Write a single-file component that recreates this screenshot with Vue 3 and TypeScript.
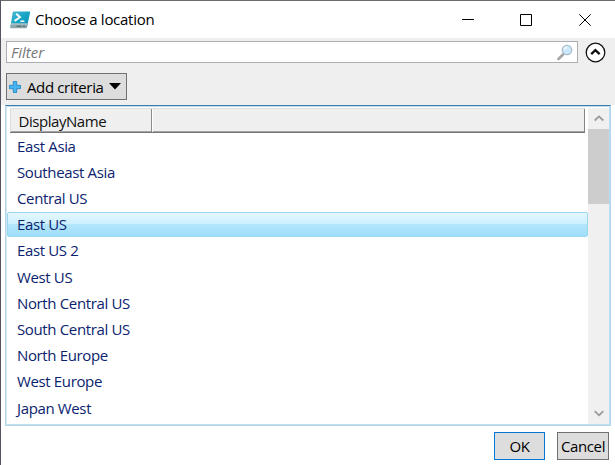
<script setup lang="ts">
import { ref } from 'vue'

const locations: string[] = [
  'East Asia', 'Southeast Asia', 'Central US', 'East US', 'East US 2', 'West US',
  'North Central US', 'South Central US', 'North Europe', 'West Europe', 'Japan West',
]
const selected = ref('East US')
const filter = ref('')
</script>

<template>
  <div class="window">
    <header class="titlebar">
      <svg class="app-icon" width="21" height="18" viewBox="0 0 21 18">
        <defs>
          <linearGradient id="screen" x1="0" y1="0" x2="1" y2="1">
            <stop offset="0" stop-color="#4fb9d4" />
            <stop offset=".5" stop-color="#16a5c5" />
            <stop offset="1" stop-color="#0788b0" />
          </linearGradient>
        </defs>
        <path d="M3.6.5H19.4Q20.3.5 20.1 1.4L17 16Q16.8 17 15.8 17H1.2Q.2 17 .4 16L2.7 1.3Q2.8.5 3.6.5Z" fill="url(#screen)" />
        <path d="M1 12.6H17.8L17 16Q16.7 17.2 15.8 17.2H1.2Q.2 17.2.4 16Z" fill="#8fa5ac" />
        <path d="M1.1 13H17.7" stroke="#bed0d5" />
        <path d="M6.5 15.2H11.5M13 15.2H15" stroke="#455c65" />
        <path d="M6.2 2.7L10 6.2L4.6 9.9" fill="none" stroke="#fff" stroke-width="1.9" />
        <path d="M10.4 10.2H14.4" stroke="#fff" stroke-width="1.5" />
      </svg>
      <span class="title">Choose a location</span>
      <div class="controls">
        <svg width="12" height="12" viewBox="0 0 12 12"><path d="M0 5.5H12" /></svg>
        <svg width="12" height="12" viewBox="0 0 12 12"><path d="M.5.5H11.5V11.5H.5Z" /></svg>
        <svg width="12" height="12" viewBox="0 0 12 12"><path d="M.3.3L11.7 11.7M11.7.3L.3 11.7" /></svg>
      </div>
    </header>

    <section class="tools">
      <div class="filter-row">
        <label class="filter">
          <input v-model="filter" type="text" placeholder="Filter" />
          <svg width="16" height="17" viewBox="0 0 16 17">
            <path d="M1.5 15L6 10.5" stroke="#a6a6a6" stroke-width="2.6" stroke-linecap="round" />
            <circle cx="10" cy="6" r="4.7" fill="#cce9fb" stroke="#aabccc" stroke-width="1.3" />
            <path d="M7.4 5.8Q8 3.5 10.2 3.4" fill="none" stroke="#f1faff" stroke-width="1.6" />
          </svg>
        </label>
        <svg class="collapse" width="21" height="21" viewBox="0 0 21 21">
          <circle cx="10.5" cy="10.5" r="9.3" fill="#fff" stroke="#111" stroke-width="1.3" />
          <path d="M6.2 12.2L10.4 8.2L14.6 12.2" fill="none" stroke="#111" stroke-width="2.3" />
        </svg>
      </div>
      <button class="criteria">
        <svg width="12" height="12" viewBox="0 0 12 12">
          <path d="M4.3.5H7.7V4.3H11.5V7.7H7.7V11.5H4.3V7.7H.5V4.3H4.3Z" fill="#46b5f0" stroke="#2389c9" stroke-width=".9" />
        </svg>
        <span>Add criteria</span>
        <svg class="caret" width="12" height="7" viewBox="0 0 12 7"><path d="M0 0H12L6 6.6Z" /></svg>
      </button>
    </section>

    <main class="list">
      <div class="table">
        <div class="head"><div class="column">DisplayName</div><div class="rest"></div></div>
        <div class="rows">
          <div v-for="name in locations" :key="name" class="row" :class="{ selected: name === selected }" @click="selected = name">
            <span>{{ name }}</span>
          </div>
        </div>
      </div>
      <div class="scrollbar">
        <div class="arrow"><svg width="10" height="7" viewBox="0 0 10 7"><path d="M.7 5.5L5 1.4L9.3 5.5" /></svg></div>
        <div class="thumb"></div>
        <div class="arrow down"><svg width="10" height="7" viewBox="0 0 10 7"><path d="M.7 1.2L5 5.3L9.3 1.2" /></svg></div>
      </div>
    </main>

    <footer class="actions">
      <button class="ok">OK</button>
      <button class="cancel">Cancel</button>
    </footer>
  </div>
</template>

<style>
body { margin: 0; overflow: hidden; }
</style>

<style scoped>
* { box-sizing: border-box; }
.window {
  width: 615px; height: 465px; display: flex; flex-direction: column;
  background: #fff; border-top: 1px solid #6d6a6d; border-left: 1px solid #55535d;
  font-family: "Open Sans", "Noto Sans", sans-serif; font-size: 15px; letter-spacing: -.36px; color: #111;
}
svg { display: block; flex: none; }
.titlebar { height: 37px; flex: none; display: flex; align-items: center; padding: 0 24px 0 9px; }
.title { margin-left: 4px; padding-bottom: 2px; letter-spacing: -.28px; white-space: nowrap; color: #000; }
.controls { margin-left: auto; display: flex; gap: 47px; }
.controls svg:first-child { margin-right: -1px; }
.controls path { fill: none; stroke: #000; stroke-width: 1; }
.tools { height: 67px; flex: none; background: #efefef; padding: 3px 9px 0 5px; }
.filter-row { display: flex; align-items: center; justify-content: space-between; height: 22px; }
.filter { width: 572px; height: 22px; display: flex; align-items: center; background: #fff; border: 1px solid #abadb3; padding: 0 4px; }
.filter input { flex: 1; min-width: 0; height: 20px; padding: 0; border: 0; outline: 0; background: none; font: inherit; letter-spacing: 0; }
.filter input::placeholder { color: #777; font-style: italic; opacity: 1; }
button { font: inherit; letter-spacing: inherit; color: #000; background: #ddd; border: 1px solid #707070; padding: 0; white-space: nowrap; }
.criteria { width: 121px; height: 27px; margin-top: 10px; display: flex; align-items: center; padding: 0 5px 0 2px; }
.criteria span { margin-left: 6px; }
.caret { margin-left: auto; }
.list {
  width: 606px; height: 321px; flex: none; margin-left: 4px; display: flex;
  border: 1px solid #b5d5e8; border-top-color: #3c7fb1; padding: 2px 1px 1px;
  box-shadow: inset 1px 0 #d3e7f3, inset -1px 0 #b5ddf3, inset 0 -1px #c3deed, inset 0 1px #c3d9e8;
}
.table { flex: 1; min-width: 0; }
.head { display: flex; width: 575px; height: 25px; margin-left: 3px; background: #efefef; border-bottom: 1px solid #777; border-top: 1px solid #ddd; box-shadow: inset 0 -1px #a3a3a3; }
.column { width: 142px; padding-left: 7.5px; line-height: 24px; letter-spacing: -.45px; border-left: 1px solid #ddd; border-right: 1px solid #8b8b8b; }
.rest { flex: 1; border-right: 1px solid #858585; border-left: 1px solid #fff; }
.rows { padding-top: .7px; }
.row { height: 26.2px; padding-left: 10px; line-height: 25px; color: #0b236e; white-space: nowrap; }
.row.selected {
  height: 25.2px; margin: 0 0 1px; padding-left: 9px; line-height: 23px;
  border: 1px solid #98d8ef; border-radius: 2px;
  background: linear-gradient(#e5f7fe 0%, #cceffe 49%, #b4e5fb 50%, #9edefa 100%);
}
.scrollbar { width: 21px; flex: none; display: flex; flex-direction: column; background: #f0f0f0; }
.arrow { height: 21px; flex: none; display: flex; align-items: center; justify-content: center; }
.arrow path { fill: none; stroke: #999; stroke-width: 1.8; }
.thumb { height: 75px; flex: none; background: #cdcdcd; }
.down { margin-top: auto; }
.actions { display: flex; justify-content: flex-end; gap: 12px; padding: 6px 6px 0 0; }
.actions button { width: 52px; height: 28px; }
.actions .ok { width: 51px; border-color: #0078d7; }
</style>
